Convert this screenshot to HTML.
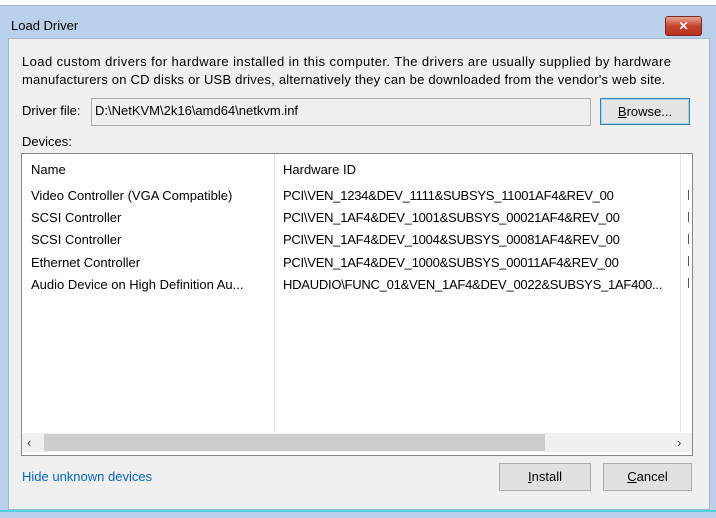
<!DOCTYPE html>
<html><head><style>
body{margin:0;width:716px;height:517px;background:#fff;position:relative;overflow:hidden;font-family:"Liberation Sans",sans-serif;font-size:13px;color:#000}
.a{position:absolute;white-space:nowrap}
.t{line-height:16px}
.h{letter-spacing:-0.25px}
</style></head><body>
<div class="a" style="left:0;top:5px;width:716px;height:512px;background:#b9d1ea;border-top:1px solid #a9bdd6"></div>
<div class="a t" style="left:11px;top:18px;color:#000">Load Driver</div>
<div class="a" style="left:665px;top:16px;width:35px;height:18px;background:linear-gradient(#e8a595,#c7432c 50%,#b8321c);border:1px solid #7a2a1c;border-radius:3px;color:#fff;font-weight:bold;font-size:12px;text-align:center;line-height:18px">✕</div>
<div class="a" style="left:8px;top:38px;width:700px;height:470px;background:#f0f0f0;border:1px solid #a0b8d0"></div>
<div class="a" style="left:0;top:510px;width:716px;height:2px;background:#4fd0e0"></div>
<div class="a t" style="left:22px;top:54px;letter-spacing:0.42px">Load custom drivers for hardware installed in this computer. The drivers are usually supplied by hardware</div>
<div class="a t" style="left:22px;top:72px;letter-spacing:0.22px">manufacturers on CD disks or USB drives, alternatively they can be downloaded from the vendor's web site.</div>
<div class="a t" style="left:22px;top:103px">Driver file:</div>
<div class="a" style="left:91px;top:98px;width:498px;height:26px;background:#f0f0f0;border:1px solid #adadad"></div>
<div class="a t" style="left:95px;top:103px">D:\NetKVM\2k16\amd64\netkvm.inf</div>
<div class="a" style="left:600px;top:98px;width:88px;height:25px;background:#e5e5e5;border:1px solid #3c7fb1;box-shadow:inset 0 0 0 1px #a6d1f0;text-align:center;line-height:25px"><u>B</u>rowse...</div>
<div class="a t" style="left:22px;top:134px">Devices:</div>
<div class="a" style="left:21px;top:153px;width:670px;height:301px;background:#fff;border:1px solid #828790"></div>
<div class="a" style="left:274px;top:154px;width:1px;height:278px;background:#e5e5e5"></div>
<div class="a" style="left:680px;top:154px;width:1px;height:278px;background:#e5e5e5"></div>
<div class="a t" style="left:31px;top:162px">Name</div>
<div class="a t" style="left:283px;top:162px">Hardware ID</div>
<div class="a t" style="left:31px;top:188px">Video Controller (VGA Compatible)</div>
<div class="a t" style="left:31px;top:210px">SCSI Controller</div>
<div class="a t" style="left:31px;top:232px">SCSI Controller</div>
<div class="a t" style="left:31px;top:255px">Ethernet Controller</div>
<div class="a t" style="left:31px;top:277px">Audio Device on High Definition Au...</div>
<div class="a t h" style="left:283px;top:188px">PCI\VEN_1234&amp;DEV_1111&amp;SUBSYS_11001AF4&amp;REV_00</div>
<div class="a t h" style="left:283px;top:210px">PCI\VEN_1AF4&amp;DEV_1001&amp;SUBSYS_00021AF4&amp;REV_00</div>
<div class="a t h" style="left:283px;top:232px">PCI\VEN_1AF4&amp;DEV_1004&amp;SUBSYS_00081AF4&amp;REV_00</div>
<div class="a t h" style="left:283px;top:255px">PCI\VEN_1AF4&amp;DEV_1000&amp;SUBSYS_00011AF4&amp;REV_00</div>
<div class="a t h" style="left:283px;top:277px">HDAUDIO\FUNC_01&amp;VEN_1AF4&amp;DEV_0022&amp;SUBSYS_1AF400...</div>
<div class="a" style="left:688px;top:190px;width:1px;height:110px;background:repeating-linear-gradient(#555 0 10px,transparent 10px 22px)"></div>
<div class="a" style="left:22px;top:433px;width:670px;height:19px;background:#f0f0f0"></div>
<div class="a" style="left:44px;top:434px;width:501px;height:17px;background:#cdcdcd"></div>
<div class="a" style="left:27px;top:435px;font-size:13px;color:#444">‹</div>
<div class="a" style="left:677px;top:435px;font-size:13px;color:#444">›</div>
<div class="a t" style="left:22px;top:469px;color:#0066cc">Hide unknown devices</div>
<div class="a" style="left:499px;top:463px;width:90px;height:26px;background:#e1e1e1;border:1px solid #adadad;text-align:center;line-height:26px"><u>I</u>nstall</div>
<div class="a" style="left:603px;top:463px;width:87px;height:26px;background:#e1e1e1;border:1px solid #adadad;text-align:center;line-height:26px"><u>C</u>ancel</div>
</body></html>
